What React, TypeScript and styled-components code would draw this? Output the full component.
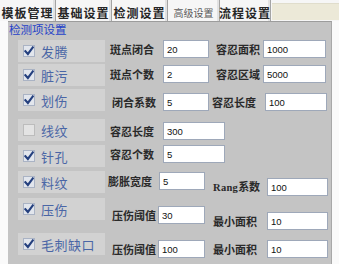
import React from "react";
import styled, { createGlobalStyle } from "styled-components";

const GlobalStyle = createGlobalStyle`
  html, body { margin: 0; padding: 0; background: #ffffff; }
  body { font-family: "Noto Sans CJK SC", "Noto Sans", sans-serif; }
  * { box-sizing: border-box; }
`;

const Frame = styled.div`
  width: 339px;
  height: 264px;
  overflow: hidden;
  display: flex;
  flex-direction: column;
  background: #f8f8f8;
`;

const TabBar = styled.div`
  height: 21px;
  display: flex;
  align-items: stretch;
  background: #f6f6f6;
`;

const Tab = styled.div<{ $w: number; $active?: boolean }>`
  width: ${(p) => p.$w}px;
  display: flex;
  align-items: center;
  justify-content: center;
  padding-top: 4px;
  font-size: ${(p) => (p.$active ? 10 : 12)}px;
  font-weight: ${(p) => (p.$active ? 400 : 700)};
  letter-spacing: ${(p) => (p.$active ? 0 : 1)}px;
  color: ${(p) => (p.$active ? "#5a5a5a" : "#262626")};
  border-right: 1px solid #a4a4a4;
  box-shadow: inset -2px 0 0 #e2e2e2;
  white-space: nowrap;
`;

const TabFill = styled.div`
  flex: 1;
  margin: 3px 0 1px 1px;
  background: #ece9d8;
  border-top: 1px solid #e0ddcc;
`;

const Body = styled.div`
  flex: 1;
  display: flex;
`;

const Gutter = styled.div<{ $w: number }>`
  width: ${(p) => p.$w}px;
  background: #fafafa;
`;

const Panel = styled.div`
  width: 324px;
  background: #c4c4c4;
  border-top: 1px solid #9c9c9c;
  border-right: 1px solid #a8a8a8;
  display: flex;
  flex-direction: column;
`;

const GroupTitle = styled.div`
  margin: 1px 0 0 1px;
  height: 13px;
  line-height: 13px;
  font-size: 11.5px;
  color: #2442c8;
  white-space: nowrap;
`;

const Rows = styled.div`
  margin-top: 4px;
  display: flex;
  flex-direction: column;
`;

const Row = styled.div<{ $mt: number }>`
  display: flex;
  align-items: flex-start;
  height: 22px;
  margin-top: ${(p) => p.$mt}px;
`;

const OptionBox = styled.div`
  margin-left: 10px;
  width: 87px;
  height: 22px;
  background: #d2d2d2;
  display: flex;
  align-items: center;
  padding-left: 5px;
  gap: 6px;
`;

const CheckSquare = styled.div<{ $on: boolean }>`
  width: 12px;
  height: 12px;
  border: 1px solid ${(p) => (p.$on ? "#aab3c4" : "#bcbcbc")};
  background: ${(p) => (p.$on ? "#e2e6ed" : "#e3e3e3")};
  display: flex;
  align-items: center;
  justify-content: center;
`;

const OptionText = styled.span`
  font-size: 13px;
  color: #4a66a6;
  white-space: nowrap;
  letter-spacing: 0.5px;
`;

const Field = styled.div<{ $ml: number; $mt: number }>`
  display: flex;
  align-items: center;
  margin-left: ${(p) => p.$ml}px;
  margin-top: ${(p) => p.$mt}px;
`;

const Label = styled.span<{ $w: number }>`
  width: ${(p) => p.$w}px;
  font-size: 11px;
  font-weight: 700;
  color: #2a2a2a;
  white-space: nowrap;
  line-height: 14px;
`;

const Latin = styled.span`
  font-family: "Liberation Serif", serif;
  font-size: 10.5px;
  letter-spacing: 0.3px;
`;

const Box = styled.input<{ $w: number }>`
  width: ${(p) => p.$w}px;
  height: 18px;
  margin: 0;
  padding: 0 0 0 3px;
  border: 1px solid #9ea8b9;
  background: #ffffff;
  font-family: "Liberation Sans", Arial, sans-serif;
  font-size: 9.5px;
  color: #111111;
  outline: none;
`;

type F = { label: React.ReactNode; ml: number; lw: number; iw: number; mt: number; val: string };
type R = { mt: number; name: string; on: boolean; f1: F; f2?: F };

const rows: R[] = [
  {
    mt: 0, name: "发腾", on: true,
    f1: { label: "斑点闭合", ml: 5, lw: 53, iw: 46, mt: 0, val: "20" },
    f2: { label: "容忍面积", ml: 7, lw: 47, iw: 63, mt: 0, val: "1000" },
  },
  {
    mt: 2, name: "脏污", on: true,
    f1: { label: "斑点个数", ml: 5, lw: 53, iw: 46, mt: 1, val: "2" },
    f2: { label: "容忍区域", ml: 7, lw: 47, iw: 63, mt: 1, val: "5000" },
  },
  {
    mt: 3, name: "划伤", on: true,
    f1: { label: "闭合系数", ml: 7, lw: 51, iw: 46, mt: 4, val: "5" },
    f2: { label: "容忍长度", ml: 3, lw: 53, iw: 62, mt: 4, val: "100" },
  },
  {
    mt: 8, name: "线纹", on: false,
    f1: { label: "容忍长度", ml: 5, lw: 53, iw: 62, mt: 3, val: "300" },
  },
  {
    mt: 4, name: "针孔", on: true,
    f1: { label: "容忍个数", ml: 5, lw: 53, iw: 62, mt: 0, val: "5" },
  },
  {
    mt: 4, name: "料纹", on: true,
    f1: { label: "膨胀宽度", ml: 3, lw: 51, iw: 46, mt: 1, val: "5" },
    f2: { label: <><Latin>Rang</Latin>系数</>, ml: 8, lw: 54, iw: 61, mt: 7, val: "100" },
  },
  {
    mt: 5, name: "压伤", on: true,
    f1: { label: "压伤阈值", ml: 7, lw: 46, iw: 47, mt: 8, val: "30" },
    f2: { label: "最小面积", ml: 8, lw: 54, iw: 61, mt: 14, val: "10" },
  },
  {
    mt: 13, name: "毛刺缺口", on: true,
    f1: { label: "压伤阈值", ml: 7, lw: 46, iw: 47, mt: 7, val: "100" },
    f2: { label: "最小面积", ml: 8, lw: 54, iw: 61, mt: 7, val: "10" },
  },
];

const Check = () => (
  <svg width="10" height="10" viewBox="0 0 10 10">
    <path d="M1.4 5.2 L3.9 8 L8.8 1.4" fill="none" stroke="#25407e" strokeWidth="2.1" strokeLinecap="square" />
  </svg>
);

const FieldView = ({ f }: { f: F }) => (
  <Field $ml={f.ml} $mt={f.mt}>
    <Label $w={f.lw}>{f.label}</Label>
    <Box $w={f.iw} defaultValue={f.val} readOnly />
  </Field>
);

export default function App() {
  return (
    <>
      <GlobalStyle />
      <Frame>
        <TabBar>
          <Tab $w={56}>模板管理</Tab>
          <Tab $w={56}>基础设置</Tab>
          <Tab $w={56}>检测设置</Tab>
          <Tab $w={52} $active>高级设置</Tab>
          <Tab $w={51}>流程设置</Tab>
          <TabFill />
        </TabBar>
        <Body>
          <Gutter $w={8} />
          <Panel>
            <GroupTitle>检测项设置</GroupTitle>
            <Rows>
              {rows.map((r) => (
                <Row key={r.name} $mt={r.mt}>
                  <OptionBox>
                    <CheckSquare $on={r.on}>{r.on && <Check />}</CheckSquare>
                    <OptionText>{r.name}</OptionText>
                  </OptionBox>
                  <FieldView f={r.f1} />
                  {r.f2 && <FieldView f={r.f2} />}
                </Row>
              ))}
            </Rows>
          </Panel>
          <Gutter $w={7} />
        </Body>
      </Frame>
    </>
  );
}
